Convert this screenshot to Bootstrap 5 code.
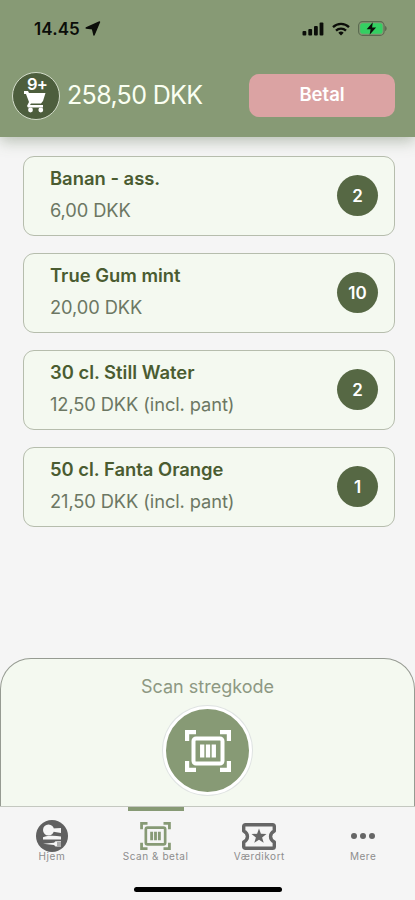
<!DOCTYPE html>
<html lang="da">
<head>
<meta charset="utf-8">
<meta name="viewport" content="width=device-width, initial-scale=1">
<title>Scan &amp; betal</title>
<link rel="stylesheet" href="https://cdn.jsdelivr.net/npm/bootstrap@5.3.0/dist/css/bootstrap.min.css">
<style>
body{font-family:Inter,"Liberation Sans",sans-serif;background:#f5f5f5;color:#58634b}
.phone{width:415px;height:900px;background:#f5f5f5}
.top-area{height:137px;background:#879a75;box-shadow:0 4px 14px rgba(95,115,85,.42)}
.status-row{height:56px;padding:1px 28px 0 34px;color:#0b0d09}
.clock{font-size:17px;font-weight:600;letter-spacing:.1px;line-height:24px}
.basket-row{height:78px;padding:0 20px 0 12px}
.basket{width:48px;height:48px;margin-top:1px;background:#4d5e3d;border:1.5px solid #d3dcca;padding-right:2px}
.basket-count{top:2px;left:14px;font-size:16.5px;line-height:19px;font-weight:600;letter-spacing:-.8px;color:#fff}
.total{font-size:25px;line-height:30px;color:#fafff2;margin-left:7px;margin-top:-1px;letter-spacing:-.65px}
.pay{width:146px;height:43px;border-radius:10px;background:#dba3a3;color:#fff;font-size:18.5px;font-weight:600;border:0;line-height:20px;padding:0 0 2px}
.items{padding:19px 20px 0 23px;gap:17px}
.item{height:80px;background:#f4f9f0;border:1px solid #b6bdad;border-radius:11px;padding:0 16px 1px 26px}
.item-name{font-size:18.4px;line-height:32px;font-weight:600;letter-spacing:0;color:#4a5c31}
.item-price{font-size:18.3px;line-height:32px;letter-spacing:-.1px;color:#6c7763;font-weight:400}
.item>div{margin-top:-3px}
.qty{width:41px;height:41px;background:#566844;color:#fff;font-size:17px;font-weight:600;padding-top:2px}
.scan-panel{height:148px;background:#f4f9f0;border:1px solid #969b92;border-bottom:0;border-radius:31px 31px 0 0;padding-top:14px}
.scan-label{font-size:18px;line-height:28px;color:#8d9882}
.scan-btn{width:89px;height:89px;background:#879a75;border:3px solid #fff;box-shadow:0 0 0 1px #dfe3e2;margin-top:5px}
.tabs{height:94px;border-top:1px solid #c4c8c0;background:#f5f5f5}
.tab-row{height:80px}
.tab{width:103.75px;color:#666;font-size:10px;line-height:11px;letter-spacing:.55px}
.tab-bar{width:56px;height:4px}
.tab.current .tab-bar{background:#879a75}
.tab-icon{height:32px;margin-top:9px}
.tab-text{color:#8d8d8d;margin-top:-1px}
.home-bar{width:148px;height:5px;background:#000}
svg{display:block;flex:none}
</style>
<script src="https://cdn.jsdelivr.net/npm/bootstrap@5.3.0/dist/js/bootstrap.bundle.min.js"></script>
</head>
<body>
<svg width="0" height="0" class="position-absolute" aria-hidden="true">
  <symbol id="scan" viewBox="0 0 46 42">
    <g fill="none" stroke="currentColor">
      <path stroke-width="4.2" d="M2.100 11V2.100H11M35 2.100h8.900V11M43.900 31v8.900H35M11 39.900H2.100V31"/>
      <rect x="8.500" y="8.500" width="29" height="25" rx="2.500" stroke-width="4"/>
      <path stroke-width="4.300" d="M17.200 14.500v13M23 14.500v13M28.800 14.500v13"/>
    </g>
  </symbol>
</svg>
<div class="phone d-flex flex-column overflow-hidden">
  <header class="top-area flex-shrink-0">
    <div class="status-row d-flex align-items-center justify-content-between">
      <div class="d-flex align-items-center gap-1">
        <span class="clock">14.45</span>
        <svg width="17" height="15" viewBox="0 0 17 15"><path fill="currentColor" stroke="currentColor" stroke-width="1.400" stroke-linejoin="round" d="M15.500 1 10 14 8.500 7.800 2.200 7z"/></svg>
      </div>
      <div class="d-flex align-items-center">
        <svg width="22" height="14" viewBox="0 0 22 14" fill="currentColor"><rect y="9" x=".5" width="3.800" height="4.500" rx="1"/><rect x="6.300" y="7" width="3.800" height="6.500" rx="1"/><rect x="12" y="4" width="3.800" height="9.500" rx="1"/><rect x="17.600" y=".5" width="3.800" height="13" rx="1"/></svg>
        <svg class="ms-2" width="18" height="14" viewBox="0 0 18 14"><g fill="none" stroke="currentColor" stroke-width="2.300"><path d="M1 5.200a11.500 11.500 0 0 1 16 0M4 8.600a7.200 7.200 0 0 1 10 0"/></g><path fill="currentColor" d="M9 13.500 6.300 10.800a3.900 3.900 0 0 1 5.400 0z"/></svg>
        <svg class="ms-2" width="29" height="15" viewBox="0 0 29 15"><rect x=".6" y=".6" width="25.500" height="13.800" rx="4" fill="none" stroke="#596950" stroke-width="1.100"/><rect x="2.200" y="2.200" width="22.300" height="10.600" rx="2.500" fill="#34cf62"/><path d="M27.300 5c1.600.6 1.600 4.400 0 5z" fill="#495840"/><path d="M14.800 1.300 8.700 8.300h3.900l-1 5.500 6.500-7.300h-4z" fill="#0b0d09"/></svg>
      </div>
    </div>
    <div class="basket-row d-flex align-items-center">
      <div class="basket rounded-circle position-relative d-flex justify-content-center flex-shrink-0">
        <span class="basket-count position-absolute">9+</span>
        <svg class="mt-3" width="24" height="25" viewBox="0 0 24 25"><path fill="#fff" d="M1 2h4l1 2h16.500l-2.500 8-2 2.500H8l-1 1.500h13v2.500H5L4 17l2-4L3 5H1z"/><circle cx="7.500" cy="21" r="2.400" fill="#fff"/><circle cx="17.800" cy="21" r="2.400" fill="#fff"/></svg>
      </div>
      <span class="total text-nowrap">258,50 DKK</span>
      <button class="btn pay ms-auto">Betal</button>
    </div>
  </header>
  <main class="items d-flex flex-column flex-grow-1">
    <div class="item d-flex align-items-center justify-content-between"><div><div class="item-name">Banan - ass.</div><div class="item-price">6,00 DKK</div></div><span class="qty rounded-circle d-flex align-items-center justify-content-center">2</span></div>
    <div class="item d-flex align-items-center justify-content-between"><div><div class="item-name">True Gum mint</div><div class="item-price">20,00 DKK</div></div><span class="qty rounded-circle d-flex align-items-center justify-content-center">10</span></div>
    <div class="item d-flex align-items-center justify-content-between"><div><div class="item-name">30 cl. Still Water</div><div class="item-price">12,50 DKK (incl. pant)</div></div><span class="qty rounded-circle d-flex align-items-center justify-content-center">2</span></div>
    <div class="item d-flex align-items-center justify-content-between"><div><div class="item-name">50 cl. Fanta Orange</div><div class="item-price">21,50 DKK (incl. pant)</div></div><span class="qty rounded-circle d-flex align-items-center justify-content-center">1</span></div>
  </main>
  <section class="scan-panel d-flex flex-column align-items-center flex-shrink-0">
    <div class="scan-label">Scan stregkode</div>
    <button class="btn scan-btn rounded-circle p-0 d-flex align-items-center justify-content-center text-white" aria-label="Scan"><svg width="46" height="42"><use href="#scan"/></svg></button>
  </section>
  <nav class="tabs flex-shrink-0" aria-label="Faner">
    <div class="tab-row d-flex">
      <div class="tab d-flex flex-column align-items-center"><div class="tab-bar"></div>
        <div class="tab-icon d-flex align-items-center"><svg width="32" height="32" viewBox="0 0 32 32"><circle cx="16" cy="16" r="16" fill="#606060"/><g fill="#f5f5f5"><circle cx="12.500" cy="10" r="5.500"/><path d="M16 8.500 25 8v5l-9-1.500zM7 17.300c5-2 12-1.800 18-.8v3H7zM7 23.800l11-1 1.500-1.500H25v1.200h-4v1h4v1h-4v1h4v1h-5.500L18 25z"/></g></svg></div>
        <span class="tab-text">Hjem</span></div>
      <div class="tab current d-flex flex-column align-items-center"><div class="tab-bar"></div>
        <div class="tab-icon d-flex align-items-center"><svg width="31" height="28" color="#879a75"><use href="#scan"/></svg></div>
        <span class="tab-text">Scan &amp; betal</span></div>
      <div class="tab d-flex flex-column align-items-center"><div class="tab-bar"></div>
        <div class="tab-icon d-flex align-items-center"><svg width="34" height="27" viewBox="0 0 34 27"><path fill="none" stroke="#666" stroke-width="3.400" stroke-linejoin="round" d="M3.500 1.700h27q1.800 0 1.800 1.800V8c-5 2.500-5 8.500 0 11v4.500q0 1.800-1.800 1.800h-27q-1.800 0-1.800-1.800V19c5-2.500 5-8.500 0-11V3.500q0-1.800 1.800-1.800z"/><path fill="#666" d="m17 5.500 1.900 5.300 5.600.2-4.400 3.400 1.600 5.400-4.700-3.100-4.700 3.100 1.600-5.400L9.500 11l5.600-.2z"/></svg></div>
        <span class="tab-text">Værdikort</span></div>
      <div class="tab d-flex flex-column align-items-center"><div class="tab-bar"></div>
        <div class="tab-icon d-flex align-items-center"><svg width="24" height="6" fill="#666"><circle cx="3" cy="3" r="3"/><circle cx="12" cy="3" r="3"/><circle cx="21" cy="3" r="3"/></svg></div>
        <span class="tab-text">Mere</span></div>
    </div>
    <div class="home-bar rounded-pill mx-auto"></div>
  </nav>
</div>
</body>
</html>
